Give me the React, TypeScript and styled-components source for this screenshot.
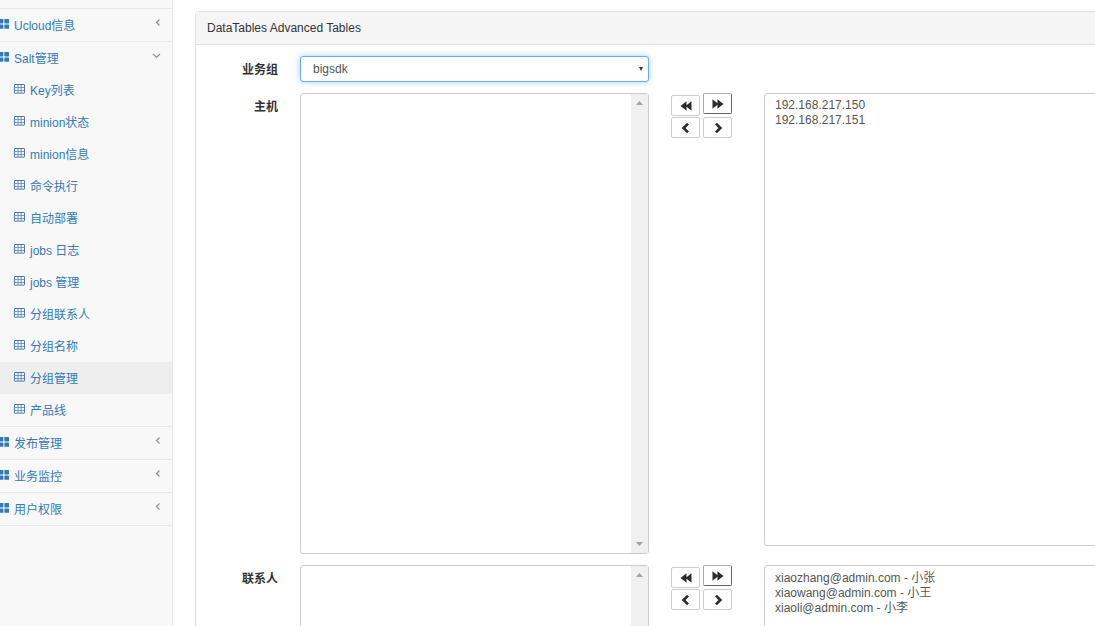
import React from 'react';
import styled, { createGlobalStyle } from 'styled-components';

const GlobalStyle = createGlobalStyle`
  * { box-sizing: border-box; }
  body {
    margin: 0;
    background: #fff;
    color: #333;
    font: 12px/18px "Liberation Sans", "Noto Sans CJK SC", sans-serif;
  }
  button, select { font: inherit; color: inherit; }
`;

const Page = styled.div`
  display: flex;
  height: 100vh;
  overflow: hidden;
`;

const Sidebar = styled.nav`
  flex: 0 0 173px;
  padding-top: 8px;
  background: #f8f8f8;
  border-right: 1px solid #e7e7e7;
`;

const Menu = styled.ul`
  list-style: none;
  margin: 0;
  padding: 0;
  border-bottom: 1px solid #e7e7e7;
`;

const MenuItem = styled.li`
  border-top: 1px solid #e7e7e7;
`;

const SubMenu = styled.ul`
  list-style: none;
  margin: 0;
  padding: 0;
`;

const MenuLink = styled.a<{ $nested?: boolean; $active?: boolean }>`
  display: flex;
  align-items: center;
  gap: 5px;
  height: 32px;
  padding-right: 11px;
  padding-left: ${(p) => (p.$nested ? '14px' : '0')};
  background: ${(p) => (p.$active ? '#eee' : 'transparent')};
  color: #337ab7;
  text-decoration: none;
`;

const LinkIcon = styled.svg`
  display: block;
  flex: none;
  margin-bottom: 2px;
`;

const LinkText = styled.span`
  flex: 1;
  padding-top: 2px;
  white-space: nowrap;
`;

const Arrow = styled.svg`
  display: block;
  flex: none;
  margin-bottom: 5px;
`;

const Content = styled.main`
  flex: 1;
  min-width: 0;
  padding: 11px 0 0 22px;
`;

const Panel = styled.section`
  margin-right: -34px;
  border: 1px solid #ddd;
  border-radius: 4px 4px 0 0;
`;

const PanelHeading = styled.h1`
  margin: 0;
  padding: 7px 11px;
  background: #f5f5f5;
  border-bottom: 1px solid #ddd;
  font-size: 12px;
  line-height: 18px;
  font-weight: normal;
`;

const Form = styled.form`
  display: grid;
  gap: 11px 0;
  padding: 11px 15px 15px 0;
`;

const Row = styled.div`
  display: grid;
  grid-template-columns: 82px minmax(0, 1fr) 71px minmax(0, 1fr);
  column-gap: 22px;
  align-items: start;
`;

const Label = styled.label`
  padding-top: 5px;
  font-weight: bold;
  text-align: right;
`;

const SelectWrap = styled.div`
  position: relative;
`;

const GroupSelect = styled.select`
  display: block;
  appearance: none;
  width: 100%;
  height: 26px;
  padding: 0 12px;
  background: #fff;
  border: 1px solid #66afe9;
  border-radius: 3px;
  box-shadow: 0 0 6px rgba(102, 175, 233, 0.6);
  color: #555;
  outline: none;
`;

const Caret = styled.svg`
  position: absolute;
  top: 11px;
  right: 6px;
  pointer-events: none;
`;

const ListBox = styled.select<{ $tall?: boolean }>`
  display: block;
  appearance: none;
  width: 100%;
  height: ${(p) => (p.$tall ? '461px' : '453px')};
  padding: 3px 8px;
  overflow: hidden;
  background: #fff;
  border: 1px solid #ccc;
  border-radius: 3px;
  color: #555;
  outline: none;

  option {
    display: flex;
    align-items: center;
    height: 15px;
    min-height: 15px;
    padding: 0 2px;
  }
`;

const ScrollTrack = styled.div`
  position: absolute;
  top: 1px;
  right: 1px;
  bottom: 1px;
  display: flex;
  flex-direction: column;
  align-items: center;
  justify-content: space-between;
  width: 17px;
  padding: 7px 0;
  background: #f0f0f0;
`;

const Buttons = styled.div`
  display: flex;
  gap: 3px;
`;

const ButtonColumn = styled.div<{ $lowered?: boolean }>`
  display: flex;
  flex-direction: column;
  gap: ${(p) => (p.$lowered ? '1px' : '3px')};
  padding-top: ${(p) => (p.$lowered ? '2px' : '0')};
`;

const MoveButton = styled.button<{ $outset?: boolean }>`
  display: flex;
  align-items: center;
  justify-content: center;
  width: 29px;
  height: 21px;
  padding: 0;
  background: #fff;
  border: 1px solid #ccc;
  border-color: ${(p) => (p.$outset ? '#aaa #666 #666 #aaa' : '#ccc')};
  border-radius: 2px;
`;

const BlocksIcon = () => (
  <LinkIcon width="9" height="10" viewBox="0 0 9 10" fill="#337ab7" aria-hidden="true">
    <rect x="-1" y="0" width="4.4" height="4.4" rx=".6" />
    <rect x="4.4" y="0" width="4.6" height="4.4" rx=".6" />
    <rect x="-1" y="5.4" width="4.4" height="4.4" rx=".6" />
    <rect x="4.4" y="5.4" width="4.6" height="4.4" rx=".6" />
  </LinkIcon>
);

const TableIcon = () => (
  <LinkIcon width="11" height="10" viewBox="0 0 11 10" fill="none" stroke="#4a7aac" aria-hidden="true">
    <rect x=".5" y=".5" width="10" height="8.6" rx=".3" />
    <path d="M1 3.5h9M1 6.5h9M4 1v8M7.2 1v8" strokeWidth=".9" stroke="#6490bf" />
  </LinkIcon>
);

const ArrowIcon = ({ open }: { open?: boolean }) => (
  <Arrow width={open ? 9 : 6} height="9" viewBox={open ? '0 0 9 9' : '0 0 6 9'} fill="none" stroke="#8d9499" strokeWidth="1.2" aria-hidden="true">
    <path d={open ? 'M1 3l3.5 3.5L8 3' : 'M4.5 1.5l-3 3 3 3'} />
  </Arrow>
);

const TinyTriangle = ({ up }: { up?: boolean }) => (
  <svg width="7" height="4" viewBox="0 0 7 4" fill="#a3a3a3" aria-hidden="true">
    <path d={up ? 'M0 4L3.5 0 7 4z' : 'M0 0h7L3.5 4z'} />
  </svg>
);

const glyphs = {
  allLeft: 'M6.5 1.2v4L11.5 1.2v9.6l-5-4v4L.5 6z',
  allRight: 'M5.5 1.2v4L.5 1.2v9.6l5-4v4l6-4.8z',
};

const DoubleGlyph = ({ right }: { right?: boolean }) => (
  <svg width="12" height="12" viewBox="0 0 12 12" fill="#2b2b2b" aria-hidden="true">
    <path d={right ? glyphs.allRight : glyphs.allLeft} />
  </svg>
);

const SingleGlyph = ({ right }: { right?: boolean }) => (
  <svg width="12" height="12" viewBox="0 0 12 12" fill="none" stroke="#2b2b2b" strokeWidth="2.6" aria-hidden="true">
    <path d={right ? 'M4 1.6L8.4 6 4 10.4' : 'M8 1.6L3.6 6 8 10.4'} />
  </svg>
);

const saltItems = [
  'Key列表',
  'minion状态',
  'minion信息',
  '命令执行',
  '自动部署',
  'jobs 日志',
  'jobs 管理',
  '分组联系人',
  '分组名称',
  '分组管理',
  '产品线',
];

const sections: { name: string; items?: string[] }[] = [
  { name: 'Ucloud信息' },
  { name: 'Salt管理', items: saltItems },
  { name: '发布管理' },
  { name: '业务监控' },
  { name: '用户权限' },
];

function DualList({ id, label, options }: { id: string; label: string; options: string[] }) {
  return (
    <Row>
      <Label htmlFor={id}>{label}</Label>
      <SelectWrap>
        <ListBox id={id} multiple $tall />
        <ScrollTrack>
          <TinyTriangle up />
          <TinyTriangle />
        </ScrollTrack>
      </SelectWrap>
      <Buttons>
        <ButtonColumn $lowered>
          <MoveButton type="button" aria-label="全部左移"><DoubleGlyph /></MoveButton>
          <MoveButton type="button" aria-label="左移"><SingleGlyph /></MoveButton>
        </ButtonColumn>
        <ButtonColumn>
          <MoveButton type="button" aria-label="全部右移" $outset><DoubleGlyph right /></MoveButton>
          <MoveButton type="button" aria-label="右移"><SingleGlyph right /></MoveButton>
        </ButtonColumn>
      </Buttons>
      <ListBox multiple aria-label={label}>
        {options.map((o) => (
          <option key={o}>{o}</option>
        ))}
      </ListBox>
    </Row>
  );
}

export default function App() {
  return (
    <Page>
      <GlobalStyle />
      <Sidebar>
        <Menu>
          {sections.map((s) => (
            <MenuItem key={s.name}>
              <MenuLink href="#">
                <BlocksIcon />
                <LinkText>{s.name}</LinkText>
                <ArrowIcon open={Boolean(s.items)} />
              </MenuLink>
              {s.items && (
                <SubMenu>
                  {s.items.map((item) => (
                    <li key={item}>
                      <MenuLink href="#" $nested $active={item === '分组管理'}>
                        <TableIcon />
                        <LinkText>{item}</LinkText>
                      </MenuLink>
                    </li>
                  ))}
                </SubMenu>
              )}
            </MenuItem>
          ))}
        </Menu>
      </Sidebar>
      <Content>
        <Panel>
          <PanelHeading>DataTables Advanced Tables</PanelHeading>
          <Form>
            <Row>
              <Label htmlFor="group">业务组</Label>
              <SelectWrap>
                <GroupSelect id="group" defaultValue="bigsdk">
                  <option>bigsdk</option>
                </GroupSelect>
                <Caret width="4" height="4" viewBox="0 0 4 4" fill="#333" aria-hidden="true">
                  <path d="M0 0h4L2 4z" />
                </Caret>
              </SelectWrap>
            </Row>
            <DualList id="hosts" label="主机" options={['192.168.217.150', '192.168.217.151']} />
            <DualList
              id="contacts"
              label="联系人"
              options={['xiaozhang@admin.com - 小张', 'xiaowang@admin.com - 小王', 'xiaoli@admin.com - 小李']}
            />
          </Form>
        </Panel>
      </Content>
    </Page>
  );
}
